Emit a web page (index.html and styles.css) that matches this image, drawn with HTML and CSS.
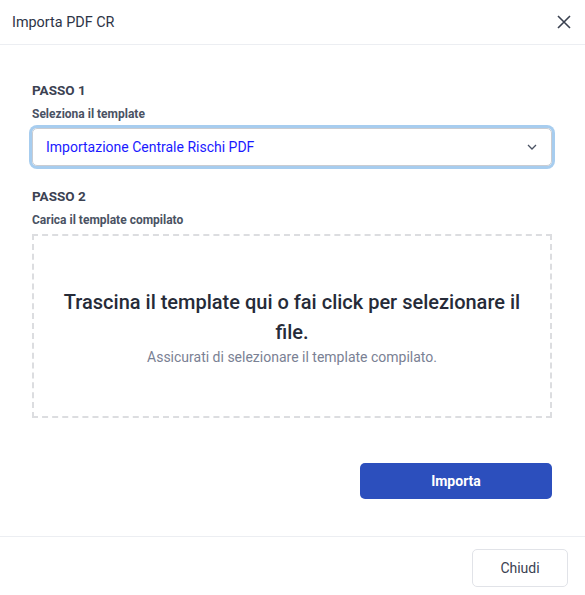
FILE: index.html
```html
<!DOCTYPE html>
<html lang="it">
<head>
    <meta charset="UTF-8">
    <title>Importa PDF CR</title>
    <link rel="stylesheet" href="styles.css">
</head>
<body>
    <div class="modal">
        <div class="modal-header">
            <span class="modal-title">Importa PDF CR</span>
            <button class="close-btn" aria-label="Chiudi">
                <svg width="14" height="14" viewBox="0 0 14 14"><path d="M1 1 L13 13 M13 1 L1 13" stroke="#3a4150" stroke-width="1.6" fill="none"/></svg>
            </button>
        </div>

        <div class="modal-body">
            <h3 class="step">PASSO 1</h3>
            <label class="field-label">Seleziona il template</label>
            <div class="select">
                <span>Importazione Centrale Rischi PDF</span>
                <svg width="10" height="6" viewBox="0 0 10 6"><path d="M1 1 L5 5 L9 1" stroke="#4a5263" stroke-width="1.3" fill="none"/></svg>
            </div>

            <h3 class="step step-2">PASSO 2</h3>
            <label class="field-label">Carica il template compilato</label>
            <div class="dropzone">
                <p class="drop-title">Trascina il template qui o fai click per selezionare il file.</p>
                <p class="drop-hint">Assicurati di selezionare il template compilato.</p>
            </div>

            <div class="actions">
                <button class="btn-primary">Importa</button>
            </div>
        </div>

        <div class="modal-footer">
            <button class="btn-light">Chiudi</button>
        </div>
    </div>
</body>
</html>
```

FILE: styles.css
```css
body {
    margin: 0;
    font-family: Roboto, "Liberation Sans", sans-serif;
    background: #fff;
    color: #2d3446;
}
.modal {
    width: 585px;
}
.modal-header {
    height: 44px;
    display: flex;
    align-items: center;
    justify-content: space-between;
    padding: 0 14px 0 12px;
    border-bottom: 1px solid #eceef2;
}
.modal-title {
    font-size: 14.4px;
    color: #2d3446;
}
.close-btn {
    border: none;
    background: none;
    padding: 0;
    display: flex;
}
.modal-body {
    padding: 37px 33px 37px 32px;
}
.step {
    margin: 0;
    font-size: 13.5px;
    font-weight: 700;
    color: #3b4252;
    line-height: 16px;
}
.step-2 {
    margin-top: 22px;
}
.field-label {
    display: block;
    margin-top: 9px;
    font-size: 12px;
    font-weight: 700;
    color: #4a5263;
    line-height: 15px;
}
.select {
    margin-top: 6px;
    height: 36px;
    border: 1px solid #c9ccd2;
    border-radius: 5px;
    box-shadow: 0 0 0 3px #a7cdef;
    display: flex;
    align-items: center;
    justify-content: space-between;
    padding: 0 14px 0 13px;
    font-size: 14px;
    color: #1a1aff;
}
.dropzone {
    margin-top: 6px;
    height: 180px;
    border: 2px dashed #dcdde0;
    display: flex;
    flex-direction: column;
    align-items: center;
    justify-content: center;
    text-align: center;
    padding: 0 24px;
}
.drop-title {
    margin: 0;
    font-size: 20px;
    font-weight: 500;
    line-height: 30px;
    color: #262b38;
}
.drop-hint {
    margin: 2px 0 0;
    font-size: 14px;
    color: #7a8194;
}
.actions {
    margin-top: 45px;
    display: flex;
    justify-content: flex-end;
}
.btn-primary {
    width: 192px;
    height: 36px;
    border: none;
    border-radius: 5px;
    background: #2c4fbd;
    color: #fff;
    font-family: inherit;
    font-size: 14px;
    font-weight: 700;
}
.modal-footer {
    border-top: 1px solid #eceef2;
    display: flex;
    justify-content: flex-end;
    padding: 12px 17px 0 0;
}
.btn-light {
    width: 96px;
    height: 38px;
    border: 1px solid #e1e3e8;
    border-radius: 5px;
    background: #fff;
    color: #3b4252;
    font-family: inherit;
    font-size: 14px;
}
```
